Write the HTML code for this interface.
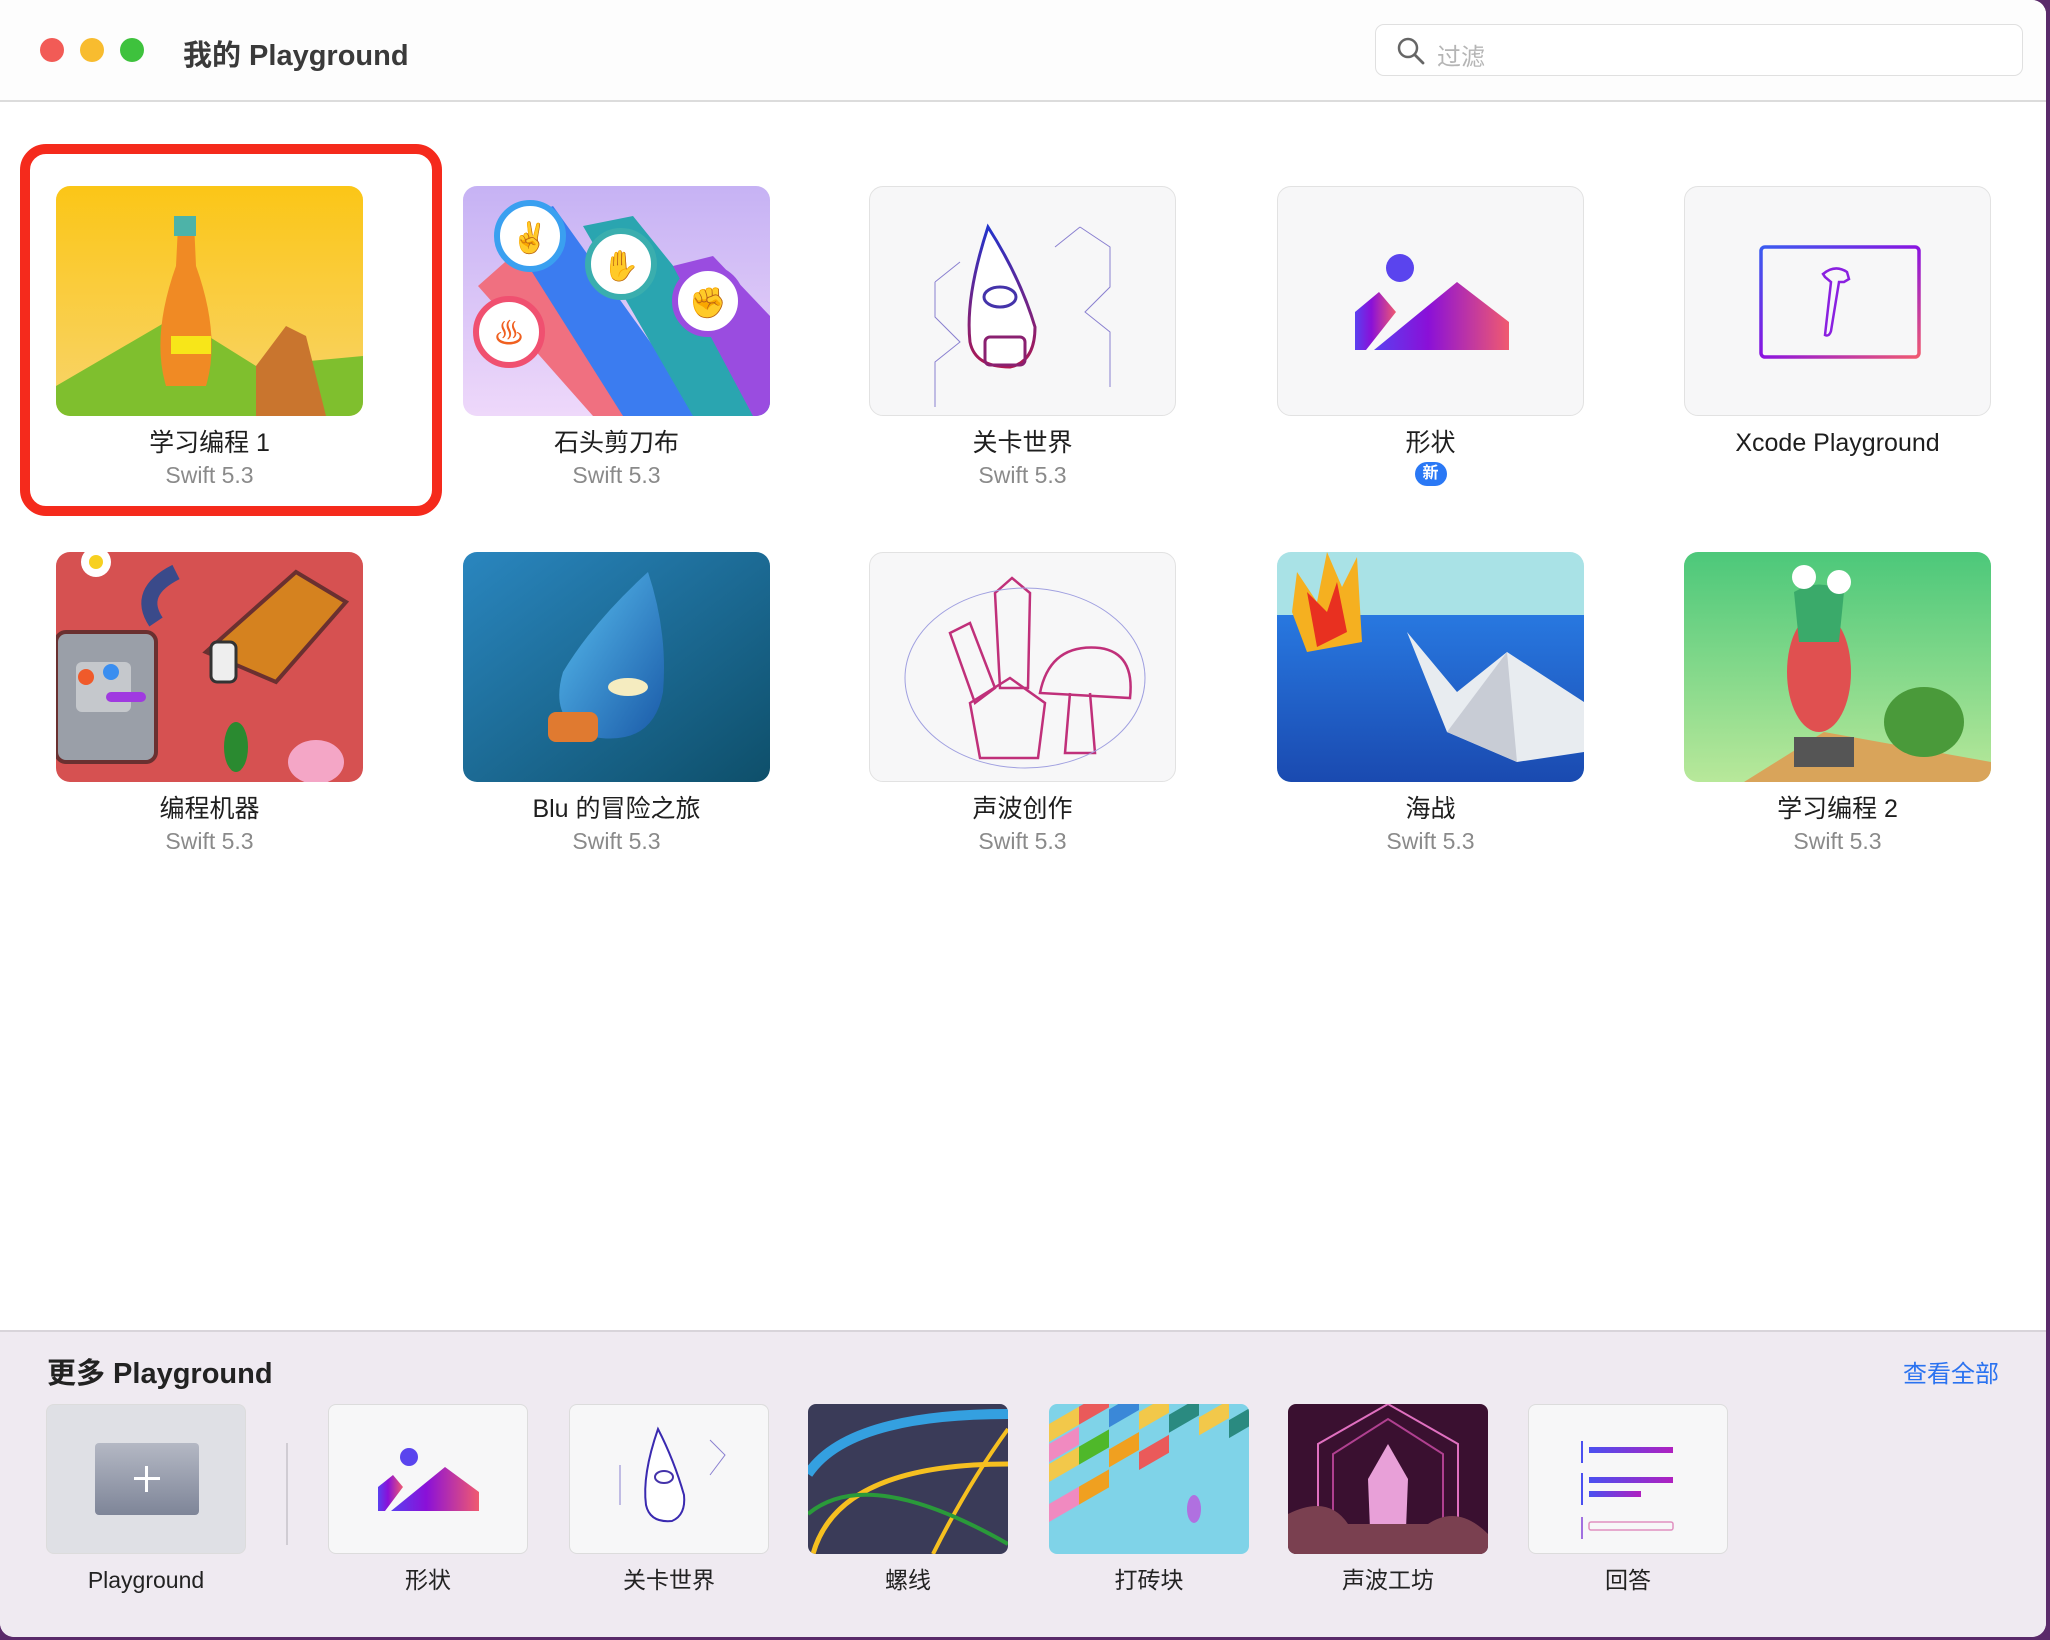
<!DOCTYPE html>
<html><head><meta charset="utf-8"><style>
*{margin:0;padding:0;box-sizing:border-box}
body{width:2050px;height:1640px;background:#5a2a6a;font-family:"Liberation Sans","Noto Sans CJK SC",sans-serif;position:relative;overflow:hidden}
#win{position:absolute;left:0;top:0;width:2046px;height:1637px;background:#fff;border-radius:0 14px 14px 14px;overflow:hidden}
#bar{position:absolute;left:0;top:0;width:100%;height:102px;border-bottom:2px solid #dcdcdc;background:#fdfdfd}
.tl{position:absolute;top:38px;width:24px;height:24px;border-radius:50%}
.title{position:absolute;left:183px;top:32px;font-size:29px;font-weight:bold;color:#3a3a3a}
#search{position:absolute;left:1375px;top:24px;width:648px;height:52px;border:1.5px solid #e0e0e0;border-radius:9px;background:#fff}
#search span{position:absolute;left:61px;top:12px;font-size:24px;color:#b5b5b5}
.card{position:absolute;width:307px}
.th{width:307px;height:230px;border-radius:14px;overflow:hidden;border:1.5px solid #e2e2e2;background:#f7f7f8}
.th svg,.bt svg{display:block}
.nm{text-align:center;font-size:25px;color:#1e1e1e;margin-top:12px;line-height:30px}
.sv{text-align:center;font-size:23px;color:#8a8a8a;margin-top:3px;line-height:28px}
#red{position:absolute;left:20px;top:144px;width:422px;height:372px;border:10px solid #f52a1c;border-radius:26px}
#more{position:absolute;left:0;top:1330px;width:100%;height:307px;background:#efeaf1;border-top:2px solid #d8d4da}
.mt{position:absolute;left:47px;top:18px;font-size:29px;font-weight:bold;color:#222}
.all{position:absolute;right:47px;top:22px;font-size:24px;color:#2a72f0}
.bc{position:absolute;top:72px;width:200px}
.bt{width:200px;height:150px;border-radius:8px;overflow:hidden;border:1.5px solid #dcdcdc;background:#f7f7f8;position:relative}
.bn{text-align:center;font-size:23px;color:#222;margin-top:12px;line-height:28px;height:28px}
</style></head><body>
<div id="win">
<div id="bar">
<div class="tl" style="left:40px;background:#f25b56"></div>
<div class="tl" style="left:80px;background:#f8bc2f"></div>
<div class="tl" style="left:120px;background:#3ec23d"></div>
<div class="title">我的 Playground</div>
<div id="search"><svg width="30" height="30" style="position:absolute;left:20px;top:11px" viewBox="0 0 30 30"><circle cx="12" cy="12" r="9" fill="none" stroke="#666" stroke-width="2.5"/><line x1="19" y1="19" x2="27" y2="27" stroke="#666" stroke-width="2.8" stroke-linecap="round"/></svg><span>过滤</span></div>
</div>

<div id="red"></div>

<div class="card" style="left:56px;top:186px"><div class="th" style="border:none"><svg width="307" height="230" viewBox="0 0 307 230"><defs><linearGradient id="y1" x1="0" y1="0" x2="0" y2="1"><stop offset="0" stop-color="#fbc617"/><stop offset="1" stop-color="#f8d46c"/></linearGradient></defs><rect width="307" height="230" fill="url(#y1)"/><polygon points="0,230 0,200 120,130 200,180 307,170 307,230" fill="#7fbf2e"/><polygon points="200,180 230,140 250,150 270,230 200,230" fill="#c9752e"/><path d="M122 40 L138 36 L140 80 Q165 150 150 200 L110 200 Q95 150 120 80Z" fill="#f08a24"/><rect x="118" y="30" width="22" height="20" fill="#4db3a8"/><rect x="115" y="150" width="40" height="18" fill="#f7e619"/></svg></div><div class="nm">学习编程 1</div><div class="sv">Swift 5.3</div></div>

<div class="card" style="left:463px;top:186px"><div class="th" style="border:none"><svg width="307" height="230" viewBox="0 0 307 230"><defs><linearGradient id="l2" x1="0" y1="0" x2="0" y2="1"><stop offset="0" stop-color="#c6b2f4"/><stop offset="1" stop-color="#eed8fa"/></linearGradient></defs><rect width="307" height="230" fill="url(#l2)"/><polygon points="15,100 60,60 260,230 130,230" fill="#f07080"/><polygon points="40,40 90,20 240,230 160,230" fill="#3b7cf0"/><polygon points="120,40 170,30 307,200 307,230 230,230" fill="#2aa5b0"/><polygon points="210,80 250,70 307,130 307,230 290,230" fill="#9a4ce0"/><circle cx="67" cy="50" r="33" fill="#fff" stroke="#3aa0f0" stroke-width="6"/><circle cx="158" cy="78" r="33" fill="#fff" stroke="#3aaeae" stroke-width="6"/><circle cx="245" cy="115" r="33" fill="#fff" stroke="#9a4ce0" stroke-width="6"/><circle cx="46" cy="146" r="33" fill="#fff" stroke="#f05070" stroke-width="6"/><text x="67" y="62" font-size="30" text-anchor="middle" fill="#e8a02c">✌</text><text x="158" y="90" font-size="30" text-anchor="middle" fill="#e8a02c">✋</text><text x="245" y="127" font-size="30" text-anchor="middle" fill="#e8a02c">✊</text><text x="46" y="158" font-size="30" text-anchor="middle" fill="#f06020">♨</text></svg></div><div class="nm">石头剪刀布</div><div class="sv">Swift 5.3</div></div>

<div class="card" style="left:869px;top:186px"><div class="th"><svg width="307" height="230" viewBox="0 0 307 230"><defs><linearGradient id="lw" x1="0" y1="0" x2="0" y2="1"><stop offset="0" stop-color="#2233cc"/><stop offset="1" stop-color="#b01850"/></linearGradient></defs><g fill="none" stroke="#8a80d0" stroke-width="1"><path d="M65 95 L90 75 M65 95 L65 130 L90 155 L65 175 L65 220 M210 40 L240 60 L240 100 L215 125 L240 145 L240 200 M210 40 L185 60"/></g><path d="M118 40 Q95 110 100 155 Q105 180 140 180 Q165 175 165 140 Q150 90 118 40Z" fill="#fff" stroke="url(#lw)" stroke-width="3"/><ellipse cx="130" cy="110" rx="16" ry="10" fill="none" stroke="#4433aa" stroke-width="3"/><rect x="115" y="150" width="40" height="28" rx="5" fill="none" stroke="#8a2070" stroke-width="3"/></svg></div><div class="nm">关卡世界</div><div class="sv">Swift 5.3</div></div>

<div class="card" style="left:1277px;top:186px"><div class="th"><svg width="307" height="230" viewBox="0 0 307 230"><defs><linearGradient id="sh" x1="0" y1="0" x2="1" y2="0"><stop offset="0" stop-color="#5a40f0"/><stop offset=".4" stop-color="#8a10d8"/><stop offset="1" stop-color="#f05a70"/></linearGradient></defs><circle cx="122" cy="81" r="14" fill="#5a44ee"/><polygon points="77,125 101,105 118,125 88,163 77,163" fill="url(#sh)"/><polygon points="96,163 179,95 231,135 231,163" fill="url(#sh)"/></svg></div><div class="nm">形状</div><div style="margin:4px auto 0;width:32px;height:24px;border-radius:12px;background:#2a78f5;color:#fff;font-size:16px;font-weight:bold;text-align:center;line-height:24px">新</div></div>

<div class="card" style="left:1684px;top:186px"><div class="th"><svg width="307" height="230" viewBox="0 0 307 230"><defs><linearGradient id="xc" x1="0" y1="0" x2="1" y2="1"><stop offset="0" stop-color="#3a5cf0"/><stop offset=".5" stop-color="#8a14e0"/><stop offset="1" stop-color="#f05a70"/></linearGradient></defs><rect x="76" y="60" width="158" height="110" rx="4" fill="none" stroke="url(#xc)" stroke-width="3.5"/><path d="M138 87 Q150 77 162 85 L164 92 L159 95 L154 95 L146 144 Q144 150 140 148 L146 95 L140 90Z" fill="none" stroke="#8a20e0" stroke-width="2.5"/></svg></div><div class="nm">Xcode Playground</div></div>

<div class="card" style="left:56px;top:552px"><div class="th" style="border:none"><svg width="307" height="230" viewBox="0 0 307 230"><rect width="307" height="230" fill="#d65151"/><rect x="0" y="80" width="100" height="130" rx="10" fill="#9a9fa8" stroke="#6a3030" stroke-width="4"/><rect x="20" y="110" width="55" height="50" rx="6" fill="#c5c8cc"/><circle cx="30" cy="125" r="8" fill="#f05a2a"/><circle cx="55" cy="120" r="8" fill="#3a8ef0"/><rect x="50" y="140" width="40" height="10" rx="5" fill="#a03ae0"/><path d="M150 100 L240 20 L290 50 L220 130Z" fill="#d5821f" stroke="#6a3030" stroke-width="4"/><rect x="155" y="90" width="25" height="40" rx="6" fill="#eee" stroke="#333" stroke-width="3"/><path d="M120 20 Q80 40 100 70" fill="none" stroke="#3a4a8a" stroke-width="16"/><circle cx="40" cy="10" r="15" fill="#fff"/><circle cx="40" cy="10" r="7" fill="#f7d020"/><ellipse cx="180" cy="195" rx="12" ry="25" fill="#2a8a30"/><ellipse cx="260" cy="210" rx="28" ry="22" fill="#f4a6c6"/></svg></div><div class="nm">编程机器</div><div class="sv">Swift 5.3</div></div>

<div class="card" style="left:463px;top:552px"><div class="th" style="border:none"><svg width="307" height="230" viewBox="0 0 307 230"><defs><linearGradient id="bl" x1="0" y1="0" x2="1" y2="1"><stop offset="0" stop-color="#2a86bf"/><stop offset="1" stop-color="#0e4f6a"/></linearGradient><linearGradient id="dr" x1="0" y1="0" x2="1" y2="1"><stop offset="0" stop-color="#5ac0f0"/><stop offset="1" stop-color="#1a5aa8"/></linearGradient></defs><rect width="307" height="230" fill="url(#bl)"/><path d="M185 20 Q130 70 100 120 Q85 170 130 185 Q190 195 200 140 Q205 80 185 20Z" fill="url(#dr)"/><ellipse cx="165" cy="135" rx="20" ry="9" fill="#f5ecc0"/><rect x="85" y="160" width="50" height="30" rx="8" fill="#e07a30"/></svg></div><div class="nm">Blu 的冒险之旅</div><div class="sv">Swift 5.3</div></div>

<div class="card" style="left:869px;top:552px"><div class="th"><svg width="307" height="230" viewBox="0 0 307 230"><g fill="none" stroke="#c0307a" stroke-width="2.5"><polygon points="125,40 142,25 160,40 158,135 130,135"/><polygon points="80,80 100,70 125,135 105,150"/><polygon points="100,150 140,125 175,150 168,205 110,205"/><path d="M170 140 Q180 90 230 95 Q265 100 260 145 Z"/><path d="M200 140 L195 200 L225 200 L220 140"/></g><ellipse cx="155" cy="125" rx="120" ry="90" fill="none" stroke="#a0a0e0" stroke-width="1"/></svg></div><div class="nm">声波创作</div><div class="sv">Swift 5.3</div></div>

<div class="card" style="left:1277px;top:552px"><div class="th" style="border:none"><svg width="307" height="230" viewBox="0 0 307 230"><defs><linearGradient id="sea" x1="0" y1="0" x2="0" y2="1"><stop offset="0" stop-color="#2878e0"/><stop offset="1" stop-color="#1a4ab0"/></linearGradient></defs><rect width="307" height="230" fill="#a9e2e6"/><rect y="63" width="307" height="167" fill="url(#sea)"/><polygon points="20,20 40,50 50,0 65,35 80,5 85,90 30,100 15,60" fill="#f5b020"/><polygon points="30,40 50,60 60,30 70,80 40,95" fill="#e83020"/><polygon points="130,80 180,140 230,100 307,150 307,200 240,210 170,180" fill="#e8ecf0"/><polygon points="170,180 230,100 240,210" fill="#c8ccd5"/></svg></div><div class="nm">海战</div><div class="sv">Swift 5.3</div></div>

<div class="card" style="left:1684px;top:552px"><div class="th" style="border:none"><svg width="307" height="230" viewBox="0 0 307 230"><defs><linearGradient id="g2" x1="0" y1="0" x2="0" y2="1"><stop offset="0" stop-color="#4cc87a"/><stop offset="1" stop-color="#b8e89a"/></linearGradient></defs><rect width="307" height="230" fill="url(#g2)"/><polygon points="60,230 140,180 307,210 307,230" fill="#d9a45a"/><rect x="110" y="185" width="60" height="30" fill="#555"/><ellipse cx="135" cy="120" rx="32" ry="60" fill="#e05050"/><path d="M110 40 Q135 25 160 40 L155 90 L115 90Z" fill="#3aaa6a"/><circle cx="120" cy="25" r="12" fill="#fff"/><circle cx="155" cy="30" r="12" fill="#fff"/><ellipse cx="240" cy="170" rx="40" ry="35" fill="#4a9a3a"/></svg></div><div class="nm">学习编程 2</div><div class="sv">Swift 5.3</div></div>

<div id="more">
<div class="mt">更多 Playground</div>
<div class="all">查看全部</div>
<div class="bc" style="left:46px"><div class="bt" style="background:#dfe0e5"><div style="position:absolute;left:48px;top:38px;width:104px;height:72px;border-radius:4px;background:linear-gradient(#b4b8c4,#7e8598)"></div><div style="position:absolute;left:98px;top:61px;width:3px;height:26px;background:#fff"></div><div style="position:absolute;left:87px;top:72px;width:26px;height:3px;background:#fff"></div></div><div class="bn">Playground</div></div>
<div style="position:absolute;left:286px;top:111px;width:2px;height:102px;background:#d0ccd3"></div>
<div class="bc" style="left:328px"><div class="bt"><svg width="200" height="150" viewBox="0 0 200 150"><defs><linearGradient id="sh2" x1="0" y1="0" x2="1" y2="0"><stop offset="0" stop-color="#5a40f0"/><stop offset=".4" stop-color="#8a10d8"/><stop offset="1" stop-color="#f05a70"/></linearGradient></defs><circle cx="80" cy="52" r="9" fill="#5a44ee"/><polygon points="49,82 64,70 74,82 56,106 49,106" fill="url(#sh2)"/><polygon points="62,106 116,62 150,87 150,106" fill="url(#sh2)"/></svg></div><div class="bn">形状</div></div>
<div class="bc" style="left:569px"><div class="bt"><svg width="200" height="150" viewBox="0 0 200 150"><path d="M88 24 Q72 70 76 100 Q80 118 102 116 Q116 110 114 90 Q104 55 88 24Z" fill="#fff" stroke="#3a2ab0" stroke-width="2"/><ellipse cx="94" cy="72" rx="9" ry="6" fill="none" stroke="#4433aa" stroke-width="2"/><path d="M50 60 L50 100 M140 35 L155 50 L140 70" fill="none" stroke="#8a80d0" stroke-width="1"/></svg></div><div class="bn">关卡世界</div></div>
<div class="bc" style="left:808px"><div class="bt" style="border:none"><svg width="200" height="150" viewBox="0 0 200 150"><rect width="200" height="150" fill="#3a3b58"/><path d="M0 70 Q40 10 200 10" fill="none" stroke="#34a0e0" stroke-width="10"/><path d="M5 150 Q30 60 200 60" fill="none" stroke="#f6c020" stroke-width="5"/><path d="M200 25 Q160 80 125 150" fill="none" stroke="#f6c020" stroke-width="4"/><path d="M0 110 Q60 60 200 140" fill="none" stroke="#2a9a3a" stroke-width="4"/></svg></div><div class="bn">螺线</div></div>
<div class="bc" style="left:1049px"><div class="bt" style="border:none"><svg width="200" height="150" viewBox="0 0 200 150"><rect width="200" height="150" fill="#7fd3e8"/><g transform="skewY(-30)"><rect x="0" y="20" width="30" height="18" fill="#f2c84a"/><rect x="30" y="20" width="30" height="18" fill="#ea5a5a"/><rect x="60" y="40" width="30" height="18" fill="#3a88d8"/><rect x="0" y="40" width="30" height="18" fill="#f08ac0"/><rect x="30" y="60" width="30" height="18" fill="#4fb82a"/><rect x="90" y="60" width="30" height="18" fill="#f2c84a"/><rect x="60" y="80" width="30" height="18" fill="#f0a020"/><rect x="0" y="60" width="30" height="18" fill="#f2c84a"/><rect x="120" y="80" width="30" height="18" fill="#2a8a80"/><rect x="150" y="100" width="30" height="18" fill="#f2c84a"/><rect x="0" y="100" width="30" height="18" fill="#f08ac0"/><rect x="30" y="100" width="30" height="18" fill="#f0a020"/><rect x="90" y="100" width="30" height="18" fill="#ea5a5a"/><rect x="180" y="120" width="30" height="18" fill="#2a8a80"/></g><ellipse cx="145" cy="105" rx="7" ry="14" fill="#b070e0"/></svg></div><div class="bn">打砖块</div></div>
<div class="bc" style="left:1288px"><div class="bt" style="border:none"><svg width="200" height="150" viewBox="0 0 200 150"><rect width="200" height="150" fill="#3a1030"/><path d="M30 150 L30 40 L100 0 L170 40 L170 150" fill="none" stroke="#e070c0" stroke-width="2"/><path d="M45 150 L45 50 L100 15 L155 50 L155 150" fill="none" stroke="#b04090" stroke-width="2"/><polygon points="100,40 80,75 82,125 118,125 120,75" fill="#e8a0d8"/><path d="M0 150 L0 110 Q40 90 60 120 L140 120 Q170 100 200 130 L200 150Z" fill="#7a4050"/></svg></div><div class="bn">声波工坊</div></div>
<div class="bc" style="left:1528px"><div class="bt"><svg width="200" height="150" viewBox="0 0 200 150"><defs><linearGradient id="an" x1="0" y1="0" x2="1" y2="0"><stop offset="0" stop-color="#4a50f0"/><stop offset="1" stop-color="#b020c0"/></linearGradient></defs><rect x="52" y="36" width="2" height="22" fill="#4a50f0"/><rect x="60" y="42" width="84" height="6" fill="url(#an)"/><rect x="52" y="68" width="2" height="32" fill="#4a50f0"/><rect x="60" y="72" width="84" height="6" fill="url(#an)"/><rect x="60" y="86" width="52" height="6" fill="url(#an)"/><rect x="52" y="112" width="2" height="22" fill="#a070e0"/><rect x="60" y="117" width="84" height="8" rx="2" fill="none" stroke="#e090c0" stroke-width="1.5"/></svg></div><div class="bn">回答</div></div>
</div>
</div>
</body></html>
